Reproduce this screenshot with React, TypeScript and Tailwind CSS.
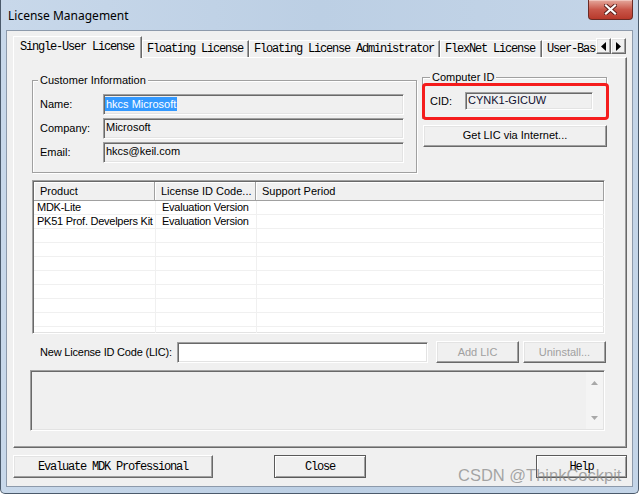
import React from "react";

const raised =
  "bg-[#f0f0f0] border border-t-white border-l-white border-r-[#696969] border-b-[#696969] shadow-[inset_-1px_-1px_0_#a0a0a0,inset_1px_1px_0_#e3e3e3]";
const sunken =
  "border border-t-[#a0a0a0] border-l-[#a0a0a0] border-r-white border-b-white shadow-[inset_1px_1px_0_#696969,inset_-1px_-1px_0_#e3e3e3]";
const etched = "border border-[#a0a0a0] shadow-[inset_1px_1px_0_#fff,1px_1px_0_#fff]";
const mono = "font-['Liberation_Mono',monospace] text-[12px] tracking-[-1.2px]";

const tabs = [
  { label: "Floating License", w: "w-[107px]" },
  { label: "Floating License Administrator", w: "w-[191px]" },
  { label: "FlexNet License", w: "w-[102px]" },
  { label: "User-Based License", w: "w-[120px]" },
];

const products = [
  { name: "MDK-Lite", code: "Evaluation Version" },
  { name: "PK51 Prof. Develpers Kit", code: "Evaluation Version" },
];

const CloseX = () => (
  <svg width="13" height="11" viewBox="0 0 13 11">
    <path d="M2 1.5 L11 9.5 M11 1.5 L2 9.5" stroke="#5a1e1a" strokeWidth="4" strokeLinecap="square" />
    <path d="M2 1.5 L11 9.5 M11 1.5 L2 9.5" stroke="#fff" strokeWidth="2.2" strokeLinecap="square" />
  </svg>
);

const Arrow = ({ dir }: { dir: "left" | "right" }) => (
  <svg width="5" height="9" viewBox="0 0 5 9">
    {dir === "left" ? <path d="M5 0 L0 4.5 L5 9 Z" fill="#000" /> : <path d="M0 0 L5 4.5 L0 9 Z" fill="#000" />}
  </svg>
);

export default function App() {
  return (
    <div className="w-[639px] h-[495px] bg-white relative overflow-hidden font-['Liberation_Sans',Arial,sans-serif] text-[11px] text-black">
      <div className="w-[639px] h-[494px] flex flex-col bg-gradient-to-r from-[#c8d8ea] via-[#bccfe4] to-[#c4d5e8] border-x border-b border-[#4b5a6b] rounded-b-[5px] pl-[5px] pr-[5px]">
        {/* Title bar */}
        <div className="h-[30px] flex items-start justify-between shrink-0">
          <span className="ml-[2px] mt-[8px] font-['Noto_Sans',sans-serif] text-[12px] leading-[16px]">
            License Management
          </span>
          <div className="w-[45px] h-[20px] rounded-b-[4px] border border-t-0 border-[#6b2a24] bg-gradient-to-b from-[#e4a89d] via-[#c9574a] to-[#b8392b] shadow-[inset_0_1px_0_#f0c4bb] flex items-center justify-center">
            <CloseX />
          </div>
        </div>

        {/* Client area */}
        <div className="w-[627px] h-[457px] bg-[#f0f0f0] border border-[#8d9aab] flex flex-col pl-[6px] pt-[5px]">
          {/* Tab strip */}
          <div className="flex items-start -mb-px relative z-10">
            <div className={`w-[583px] h-[22px] flex items-end overflow-hidden ${mono}`}>
              <div className="shrink-0 w-[129px] h-[22px] bg-[#f0f0f0] border-t border-l border-white border-r border-r-[#696969] shadow-[inset_-1px_0_0_#a0a0a0] flex items-center pl-[6px] pb-[2px]">
                Single-User License
              </div>
              {tabs.map((t) => (
                <div
                  key={t.label}
                  className={`shrink-0 ${t.w} h-[17px] mb-px bg-[#f0f0f0] border-t border-white border-r border-r-[#696969] shadow-[inset_-1px_0_0_#a0a0a0,inset_1px_0_0_#fff] flex items-center pl-[5px] whitespace-nowrap`}
                >
                  {t.label}
                </div>
              ))}
            </div>
            <div className="flex mt-[2px]">
              <div className={`w-[15px] h-[16px] ${raised} flex items-center justify-center`}>
                <Arrow dir="left" />
              </div>
              <div className={`w-[15px] h-[16px] ${raised} flex items-center justify-center`}>
                <Arrow dir="right" />
              </div>
            </div>
          </div>

          {/* Tab panel */}
          <div className="w-[614px] h-[391px] shrink-0 relative border border-t-white border-l-white border-r-[#696969] border-b-[#696969] shadow-[inset_-1px_-1px_0_#a0a0a0] flex flex-col">
            <div className="flex items-start ml-[18px]">
              {/* Customer Information */}
              <fieldset className={`w-[385px] h-[99px] mt-[16px] ${etched} pb-[8px]`}>
                <legend className="ml-[5px] px-[2px] leading-[13px] bg-[#f0f0f0]">Customer Information</legend>
                <div className="flex flex-col gap-[3px] mt-[7px] pl-[7px]">
                  <div className="flex items-center">
                    <span className="w-[63px]">Name:</span>
                    <div className={`w-[301px] h-[21px] ${sunken} flex items-center pl-[1px] pb-[1px]`}>
                      <span className="bg-[#3399ff] text-white leading-[14px] px-px">hkcs Microsoft</span>
                    </div>
                  </div>
                  <div className="flex items-center">
                    <span className="w-[63px]">Company:</span>
                    <div className={`w-[301px] h-[21px] ${sunken} flex items-center pl-[2px] pb-[2px]`}>Microsoft</div>
                  </div>
                  <div className="flex items-center">
                    <span className="w-[63px]">Email:</span>
                    <div className={`w-[301px] h-[21px] ${sunken} flex items-center pl-[2px] pb-[2px]`}>hkcs@keil.com</div>
                  </div>
                </div>
              </fieldset>

              {/* Computer ID */}
              <div className="ml-[5px] w-[185px] flex flex-col">
                <fieldset className={`w-[185px] h-[48px] mt-[13px] ${etched}`}>
                  <legend className="ml-[7px] px-[2px] leading-[13px] bg-[#f0f0f0]">Computer ID</legend>
                  <div className="flex items-center mt-[8px] pl-[7px]">
                    <span className="w-[35px]">CID:</span>
                    <div className={`w-[128px] h-[18px] ${sunken} flex items-center pl-[2px] pb-[1px] text-[#101030]`}>
                      CYNK1-GICUW
                    </div>
                  </div>
                </fieldset>
                <button className={`ml-[1px] mt-[6px] w-[184px] h-[22px] ${raised} pb-[1px]`}>Get LIC via Internet...</button>
              </div>
            </div>

            {/* Product list */}
            <div className={`ml-[18px] mt-[7px] w-[573px] h-[154px] bg-white overflow-hidden ${sunken}`}>
              <div className="h-[19px] flex bg-[#f0f0f0] border-b border-[#a0a0a0] ml-[1px] mt-[1px]">
                <div className="w-[121px] border-r border-[#a0a0a0] shadow-[inset_1px_1px_0_#fff] flex items-center pl-[6px]">Product</div>
                <div className="w-[101px] border-r border-[#a0a0a0] shadow-[inset_1px_1px_0_#fff] flex items-center pl-[6px]">License ID Code...</div>
                <div className="w-[348px] border-r border-[#a0a0a0] shadow-[inset_1px_1px_0_#fff] flex items-center pl-[6px]">Support Period</div>
              </div>
              <div className="ml-[1px] flex flex-col tracking-[-0.25px]">
                {Array.from({ length: 10 }).map((_, i) => {
                  const p = products[i];
                  return (
                    <div key={i} className="h-[14px] shrink-0 flex border-b border-[#f0f0f0]">
                      <div className="w-[122px] border-r border-[#f0f0f0] flex items-center pl-[3px] whitespace-nowrap overflow-hidden">{p?.name}</div>
                      <div className="w-[101px] border-r border-[#f0f0f0] flex items-center pl-[6px] whitespace-nowrap overflow-hidden">{p?.code}</div>
                      <div className="flex-1"></div>
                    </div>
                  );
                })}
              </div>
            </div>

            {/* New LIC row */}
            <div className="flex items-center mt-[7px] ml-[26px] h-[22px]">
              <span className="w-[137px] tracking-[-0.2px]">New License ID Code (LIC):</span>
              <div className={`w-[251px] h-[21px] bg-white ${sunken}`}></div>
              <button className={`ml-[8px] w-[83px] h-[22px] ${raised} text-[#a0a0a0]`}>Add LIC</button>
              <button className={`ml-[4px] w-[83px] h-[22px] ${raised} text-[#a0a0a0]`}>Uninstall...</button>
            </div>

            {/* Message box */}
            <div className={`ml-[16px] mt-[7px] w-[575px] h-[61px] ${sunken} flex justify-end`}>
              <div className="w-[17px] mr-[1px] my-[1px] flex flex-col items-center justify-between py-[9px] bg-[#f4f4f4]">
                <svg width="7" height="4" viewBox="0 0 7 4">
                  <path d="M0 4 L3.5 0 L7 4 Z" fill="#a8a8a8" />
                </svg>
                <svg width="7" height="4" viewBox="0 0 7 4">
                  <path d="M0 0 L3.5 4 L7 0 Z" fill="#a8a8a8" />
                </svg>
              </div>
            </div>

            {/* Annotation box */}
            <div className="absolute left-[408px] top-[25px] w-[187px] h-[37px] border-[3px] border-[#f51c1c] rounded-[4px]"></div>
          </div>

          {/* Bottom buttons */}
          <div className={`flex mt-[7px] ${mono}`}>
            <button className={`w-[200px] h-[23px] ${raised}`}>Evaluate MDK Professional</button>
            <button className="ml-[61px] w-[92px] h-[23px] bg-[#f0f0f0] border border-[#5a5a5a] shadow-[inset_1px_1px_0_#fff,inset_-1px_-1px_0_#a0a0a0]">Close</button>
            <button className="ml-[170px] w-[91px] h-[23px] bg-[#f0f0f0] border border-[#5a5a5a] shadow-[inset_1px_1px_0_#fff,inset_-1px_-1px_0_#a0a0a0]">Help</button>
          </div>
        </div>
      </div>

      {/* Watermark */}
      <div className="absolute left-[458px] top-[465px] text-[16.5px] leading-[20px] text-[#8a8a8a]/75 whitespace-nowrap">
        CSDN @ThinkCockpit
      </div>
    </div>
  );
}
